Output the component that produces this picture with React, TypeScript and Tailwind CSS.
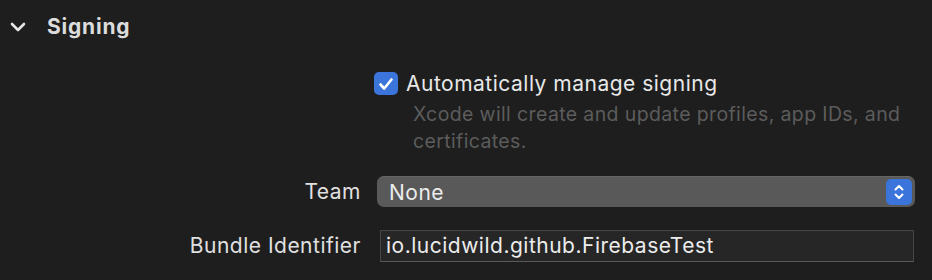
import React from "react";

export default function App() {
  return (
    <div
      className="w-[932px] h-[280px] bg-[#1e1e1e] text-[#e3e3e3] overflow-hidden"
      style={{ fontFamily: "Inter, 'Noto Sans', sans-serif" }}
    >
      <div className="flex items-center h-[53px] pl-[10px]">
        <svg width="16" height="10" viewBox="0 0 16 10" className="shrink-0">
          <path d="M2 2 L8 8 L14 2" stroke="#e6e6e6" strokeWidth="2.6" fill="none" strokeLinecap="round" strokeLinejoin="round" />
        </svg>
        <span className="ml-[21px] text-[21px] font-bold text-[#dcdcdc] tracking-[0.8px]">Signing</span>
      </div>

      <div className="flex pl-[374px] pt-[19px]">
        <div className="w-[24px] h-[23px] rounded-[5px] bg-[#3b74db] flex items-center justify-center shrink-0">
          <svg width="16" height="14" viewBox="0 0 16 14">
            <path d="M2.5 7.5 L6.2 11.5 L13.5 2.5" stroke="white" strokeWidth="2.6" fill="none" strokeLinecap="round" strokeLinejoin="round" />
          </svg>
        </div>
        <div className="ml-[8px] flex flex-col">
          <span className="text-[21px] leading-[24px] text-[#e8e8e8] tracking-[0.5px]">Automatically manage signing</span>
          <span className="ml-[7px] mt-[5px] text-[19.5px] leading-[27px] text-[#5c5c5c] tracking-[0.37px] w-[510px]">
            Xcode will create and update profiles, app IDs, and certificates.
          </span>
        </div>
      </div>

      <div className="flex items-center mt-[21px]">
        <div className="w-[361px] text-right text-[21px] text-[#e0e0e0] tracking-[0.5px]">Team</div>
        <div className="ml-[16px] w-[538px] h-[31px] rounded-[7px] bg-[#595959] border-t border-[#666] flex items-center justify-between pl-[12px] pr-[3px]">
          <span className="text-[21px] text-[#ececec] tracking-[0.5px]">None</span>
          <div className="w-[26px] h-[26px] rounded-[5px] bg-[#3b74db] flex items-center justify-center">
            <svg width="12" height="18" viewBox="0 0 12 18">
              <path d="M2.5 6.5 L6 3 L9.5 6.5 M2.5 11.5 L6 15 L9.5 11.5" stroke="white" strokeWidth="2" fill="none" strokeLinecap="round" strokeLinejoin="round" />
            </svg>
          </div>
        </div>
      </div>

      <div className="flex items-center mt-[22px]">
        <div className="w-[361px] text-right text-[21px] text-[#e0e0e0] tracking-[0.5px]">Bundle Identifier</div>
        <div className="ml-[19px] w-[534px] h-[32px] bg-[#262626] border border-[#454545] border-b-[#5a5a5a] flex items-center pl-[5px]">
          <span className="text-[21px] text-[#ececec] tracking-[0.5px]">io.lucidwild.github.FirebaseTest</span>
        </div>
      </div>
    </div>
  );
}
